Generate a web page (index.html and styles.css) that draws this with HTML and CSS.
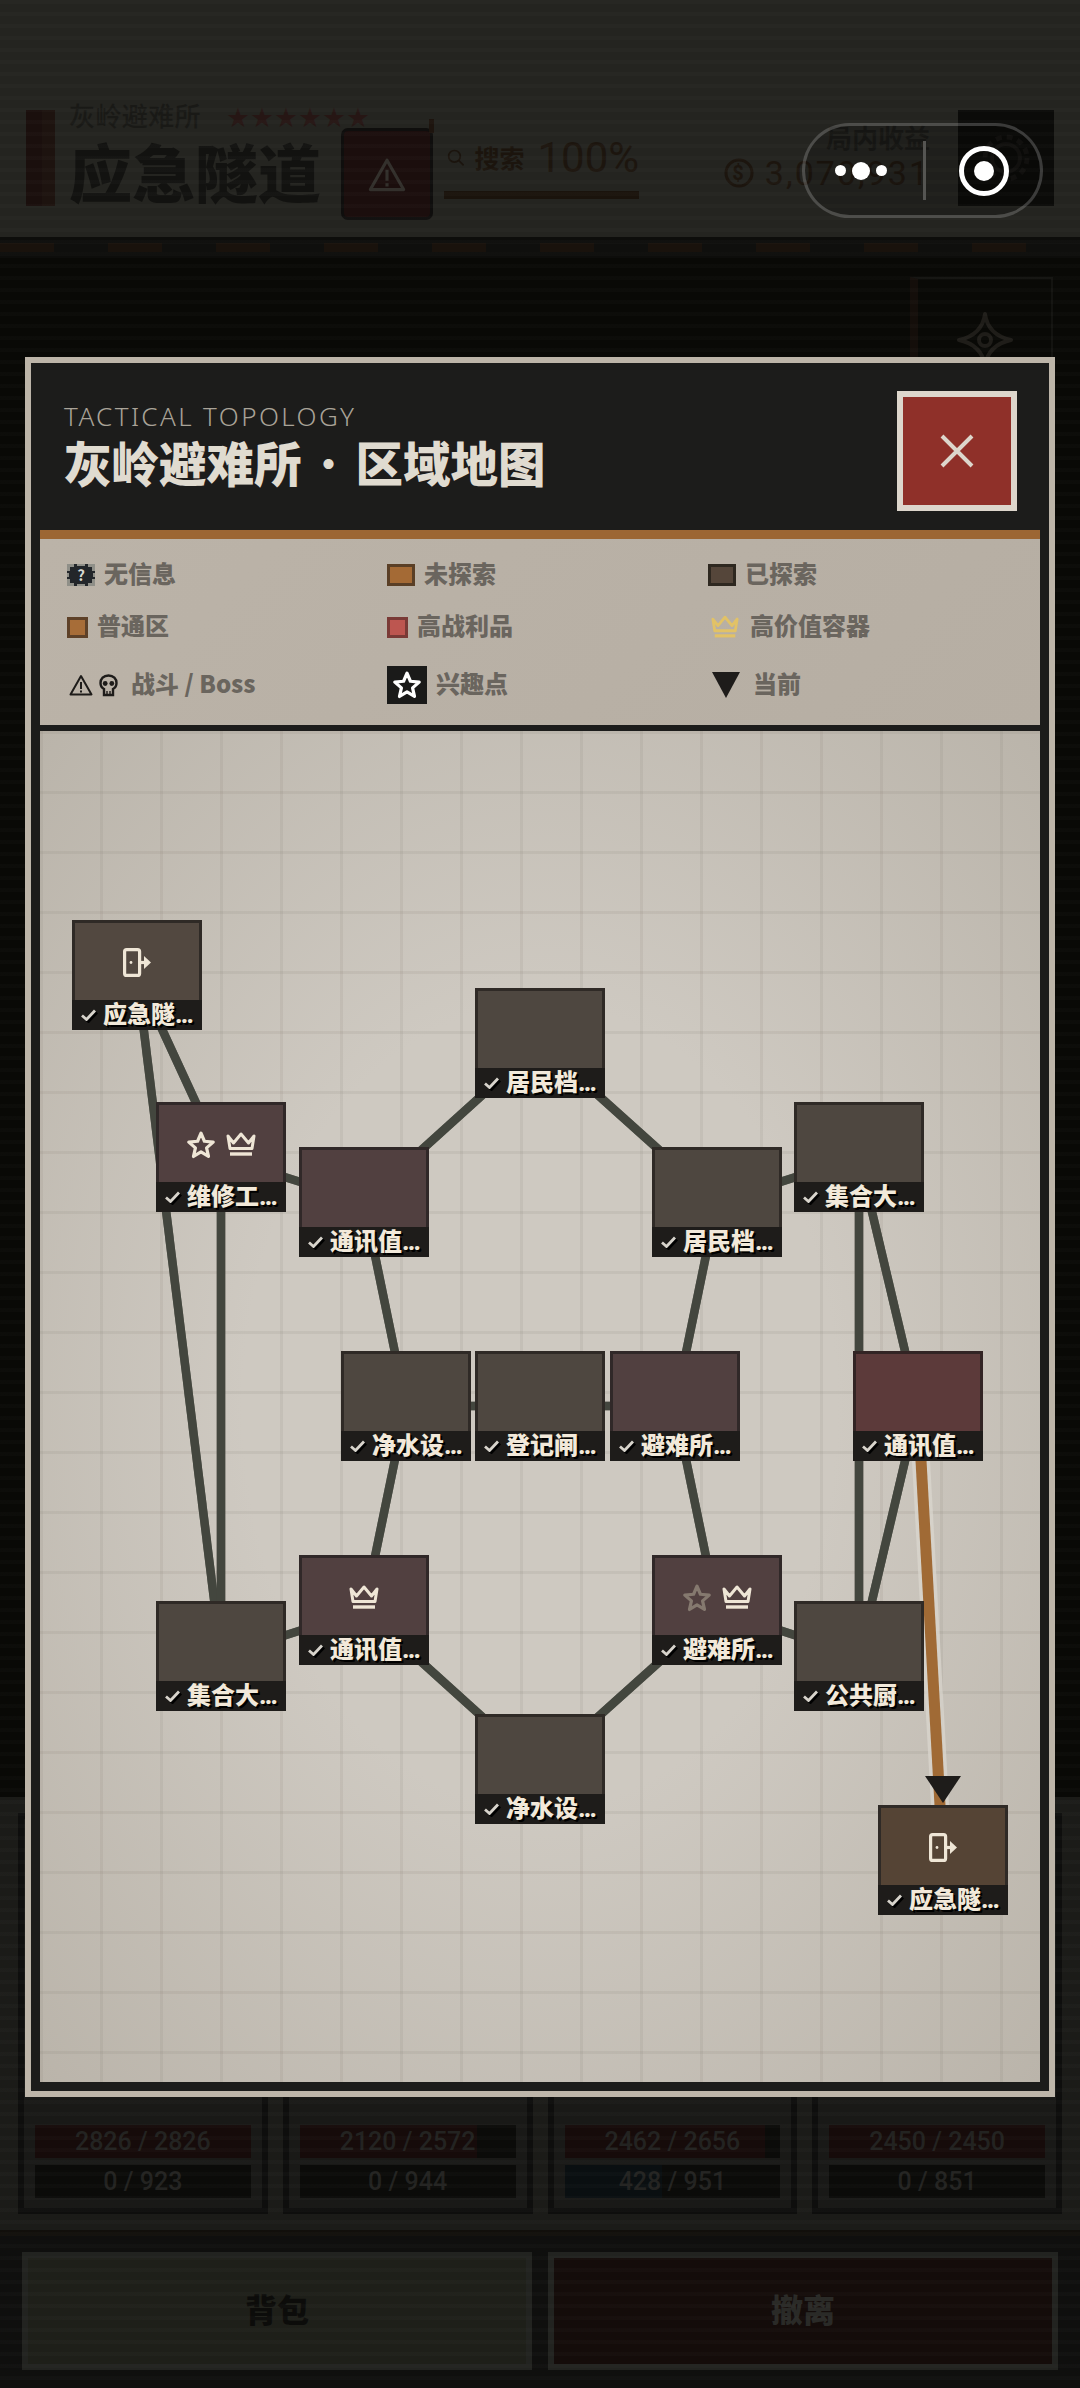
FILE: index.html
```html
<!DOCTYPE html>
<html lang="zh-CN">
<head>
    <meta charset="UTF-8">
    <meta name="viewport" content="width=device-width, initial-scale=1.0">
    <title>灰岭避难所 - 区域地图</title>
    <link rel="stylesheet" href="styles.css">
</head>
<body>
    <svg class="icon-defs" aria-hidden="true">
        <symbol id="i-star" viewBox="0 0 28 26">
            <polygon points="14,2 17.2,9.5 25.4,10.3 19.2,15.7 21,23.7 14,19.5 7,23.7 8.8,15.7 2.6,10.3 10.8,9.5" fill="none" stroke="currentColor" stroke-width="3" stroke-linejoin="round"/>
        </symbol>
        <symbol id="i-crown" viewBox="0 0 30 25">
            <path d="M2 4 L7.5 11 L15 2 L22.5 11 L28 4 L26 16.5 H4 Z" fill="none" stroke="currentColor" stroke-width="3" stroke-linejoin="round"/>
            <path d="M4 22 H26" fill="none" stroke="currentColor" stroke-width="3.4"/>
        </symbol>
        <symbol id="i-exit" viewBox="0 0 28 29">
            <rect x="1.6" y="1.6" width="15" height="25.8" rx="2" fill="none" stroke="currentColor" stroke-width="3.2"/>
            <circle cx="8" cy="14.5" r="1.4" fill="currentColor"/>
            <path d="M17 14.5 H23" stroke="currentColor" stroke-width="3.2"/>
            <path d="M21 8 L28 14.5 L21 21 Z" fill="currentColor"/>
        </symbol>
        <symbol id="i-check" viewBox="0 0 15 12">
            <path d="M1 6.5 L5.5 10.5 L14 1.5" fill="none" stroke="currentColor" stroke-width="2.8"/>
        </symbol>
        <symbol id="i-warn" viewBox="0 0 24 22">
            <path d="M12 2 L22.5 20.5 H1.5 Z" fill="none" stroke="currentColor" stroke-width="2" stroke-linejoin="round"/>
            <path d="M12 8 V15 M12 16.5 V18.5" stroke="currentColor" stroke-width="2"/>
        </symbol>
    </svg>

    <div class="game">
        <header class="topbar">
            <div class="stripe"></div>
            <div class="zone-title">
                <div class="zone-sub">
                    <span>灰岭避难所</span>
                    <span class="zone-stars">★★★★★★</span>
                </div>
                <h1>应急隧道</h1>
            </div>
            <div class="danger-btn">
                <svg width="38" height="35"><use href="#i-warn"/></svg>
            </div>
            <div class="search-box">
                <div class="search-row">
                    <svg class="search-icon" width="21" height="21" viewBox="0 0 21 21"><circle cx="9" cy="9" r="7" fill="none" stroke="currentColor" stroke-width="2"/><path d="M14 14 L20 20" stroke="currentColor" stroke-width="2"/></svg>
                    <span class="search-label">搜索</span>
                    <span class="search-pct">100%</span>
                </div>
                <div class="search-bar"></div>
            </div>
            <div class="income">
                <div class="income-label">局内收益</div>
                <div class="income-value">
                    <svg width="30" height="30" viewBox="0 0 30 30"><circle cx="15" cy="15" r="13" fill="none" stroke="currentColor" stroke-width="3"/><text x="15" y="22" text-anchor="middle" font-size="20" font-weight="700" fill="currentColor">$</text></svg>
                    <span>3,070,931</span>
                </div>
            </div>
            <div class="gear-btn">
                <svg width="54" height="54" viewBox="0 0 54 54"><circle cx="27" cy="27" r="14" fill="none" stroke="currentColor" stroke-width="4"/><circle cx="27" cy="27" r="21" fill="none" stroke="currentColor" stroke-width="5" stroke-dasharray="6 5"/></svg>
            </div>
        </header>
        <div class="hazard"><div class="hazard-dash"></div></div>

        <main class="field">
            <div class="side-card">
                <svg width="56" height="56" viewBox="0 0 56 56"><path d="M28 2 Q31 23 54 28 Q31 33 28 54 Q25 33 2 28 Q25 23 28 2 Z" fill="none" stroke="currentColor" stroke-width="4" stroke-linejoin="round"/><circle cx="28" cy="28" r="6" fill="none" stroke="currentColor" stroke-width="4"/></svg>
            </div>
        </main>

        <section class="party">
            <div class="cards">
                <div class="card">
                    <div class="bar"><div class="bar-fill hp w-100"></div><span>2826 / 2826</span></div>
                    <div class="bar"><span>0 / 923</span></div>
                </div>
                <div class="card">
                    <div class="bar"><div class="bar-fill hp w-82"></div><span>2120 / 2572</span></div>
                    <div class="bar"><span>0 / 944</span></div>
                </div>
                <div class="card">
                    <div class="bar"><div class="bar-fill hp w-93"></div><span>2462 / 2656</span></div>
                    <div class="bar"><div class="bar-fill mp w-45"></div><span>428 / 951</span></div>
                </div>
                <div class="card">
                    <div class="bar"><div class="bar-fill hp w-100"></div><span>2450 / 2450</span></div>
                    <div class="bar"><span>0 / 851</span></div>
                </div>
            </div>
        </section>

        <footer class="actions">
            <div class="action bag">背包</div>
            <div class="action leave">撤离</div>
        </footer>
    </div>

    <div class="capsule">
        <div class="capsule-dots"><i></i><i class="big"></i><i></i></div>
        <div class="capsule-line"></div>
        <div class="capsule-target"><i></i></div>
    </div>

    <div class="modal">
        <div class="modal-head">
            <div>
                <div class="modal-en">TACTICAL TOPOLOGY</div>
                <div class="modal-title">灰岭避难所<span class="title-dot">·</span>区域地图</div>
            </div>
            <div class="close-btn">
                <svg width="36" height="36" viewBox="0 0 36 36"><path d="M3 3 L33 33 M33 3 L3 33" stroke="currentColor" stroke-width="4"/></svg>
            </div>
        </div>

        <div class="legend">
            <div class="legend-item">
                <svg class="unknown-icon" width="28" height="22" viewBox="0 0 28 22">
                    <rect width="28" height="22" fill="#8f8f88"/>
                    <path d="M7 0 H10 V2 H18 V0 H21 V3 H25 V7 H28 V9 H26 V13 H28 V15 H25 V19 H21 V22 H18 V20 H10 V22 H7 V19 H3 V15 H0 V13 H2 V9 H0 V7 H3 V3 H7 Z" fill="#23262a"/>
                    <text x="14" y="17" text-anchor="middle" font-size="15" font-weight="700" fill="#d8d8d2">?</text>
                </svg>
                <span>无信息</span>
            </div>
            <div class="legend-item"><i class="swatch wide unexplored"></i><span>未探索</span></div>
            <div class="legend-item"><i class="swatch wide explored"></i><span>已探索</span></div>
            <div class="legend-item"><i class="swatch normal"></i><span>普通区</span></div>
            <div class="legend-item"><i class="swatch loot"></i><span>高战利品</span></div>
            <div class="legend-item crown-item">
                <svg class="gold" width="28" height="24"><use href="#i-crown"/></svg>
                <span>高价值容器</span>
            </div>
            <div class="legend-item combat-item">
                <svg class="ink" width="24" height="22"><use href="#i-warn"/></svg>
                <svg class="ink" width="19" height="23" viewBox="0 0 19 23">
                    <path d="M9.5 1.5 C4.5 1.5 1.5 4.8 1.5 9 C1.5 12 3 14 5 15 V21 H14 V15 C16 14 17.5 12 17.5 9 C17.5 4.8 14.5 1.5 9.5 1.5 Z" fill="none" stroke="currentColor" stroke-width="2.4"/>
                    <circle cx="6.2" cy="9.5" r="2.4" fill="currentColor"/>
                    <circle cx="12.8" cy="9.5" r="2.4" fill="currentColor"/>
                    <path d="M8 17 V21 M11 17 V21" stroke="currentColor" stroke-width="1.4"/>
                </svg>
                <span>战斗 / Boss</span>
            </div>
            <div class="legend-item">
                <div class="poi-box"><svg width="30" height="28"><use href="#i-star"/></svg></div>
                <span>兴趣点</span>
            </div>
            <div class="legend-item current-item"><i class="down-arrow"></i><span>当前</span></div>
        </div>

        <div class="map">
            <svg class="links" width="1000" height="1351" viewBox="0 0 1000 1351">
                <use href="#link-set" class="link-halo"/>
                <g id="link-set">
                    <line x1="97" y1="244" x2="181" y2="925"/>
                    <line x1="97" y1="244" x2="181" y2="426"/>
                    <line x1="181" y1="426" x2="181" y2="925"/>
                    <line x1="181" y1="426" x2="324" y2="471"/>
                    <line x1="324" y1="471" x2="500" y2="312"/>
                    <line x1="500" y1="312" x2="677" y2="471"/>
                    <line x1="677" y1="471" x2="819" y2="426"/>
                    <line x1="324" y1="471" x2="366" y2="675"/>
                    <line x1="366" y1="675" x2="635" y2="675"/>
                    <line x1="677" y1="471" x2="635" y2="675"/>
                    <line x1="819" y1="426" x2="878" y2="675"/>
                    <line x1="819" y1="426" x2="819" y2="925"/>
                    <line x1="878" y1="675" x2="819" y2="925"/>
                    <line x1="366" y1="675" x2="324" y2="879"/>
                    <line x1="635" y1="675" x2="677" y2="879"/>
                    <line x1="324" y1="879" x2="181" y2="925"/>
                    <line x1="677" y1="879" x2="819" y2="925"/>
                    <line x1="324" y1="879" x2="500" y2="1038"/>
                    <line x1="677" y1="879" x2="500" y2="1038"/>
                </g>
                <line class="route-halo" x1="878" y1="675" x2="903" y2="1129"/>
                <line class="route" x1="878" y1="675" x2="903" y2="1129"/>
            </svg>

            <div class="node n1 tone-start">
                <div class="node-body"><svg class="cream" width="28" height="29"><use href="#i-exit"/></svg></div>
                <div class="node-label"><svg width="15" height="12"><use href="#i-check"/></svg>应急隧…</div>
            </div>
            <div class="node n2 tone-rose">
                <div class="node-body">
                    <svg class="cream" width="30" height="28"><use href="#i-star"/></svg>
                    <svg class="cream" width="30" height="25"><use href="#i-crown"/></svg>
                </div>
                <div class="node-label"><svg width="15" height="12"><use href="#i-check"/></svg>维修工…</div>
            </div>
            <div class="node n3 tone-rose">
                <div class="node-body"></div>
                <div class="node-label"><svg width="15" height="12"><use href="#i-check"/></svg>通讯值…</div>
            </div>
            <div class="node n4">
                <div class="node-body"></div>
                <div class="node-label"><svg width="15" height="12"><use href="#i-check"/></svg>居民档…</div>
            </div>
            <div class="node n5">
                <div class="node-body"></div>
                <div class="node-label"><svg width="15" height="12"><use href="#i-check"/></svg>居民档…</div>
            </div>
            <div class="node n6">
                <div class="node-body"></div>
                <div class="node-label"><svg width="15" height="12"><use href="#i-check"/></svg>集合大…</div>
            </div>
            <div class="node n7">
                <div class="node-body"></div>
                <div class="node-label"><svg width="15" height="12"><use href="#i-check"/></svg>净水设…</div>
            </div>
            <div class="node n8">
                <div class="node-body"></div>
                <div class="node-label"><svg width="15" height="12"><use href="#i-check"/></svg>登记闸…</div>
            </div>
            <div class="node n9 tone-rose">
                <div class="node-body"></div>
                <div class="node-label"><svg width="15" height="12"><use href="#i-check"/></svg>避难所…</div>
            </div>
            <div class="node n10 tone-red">
                <div class="node-body"></div>
                <div class="node-label"><svg width="15" height="12"><use href="#i-check"/></svg>通讯值…</div>
            </div>
            <div class="node n11 tone-rose">
                <div class="node-body"><svg class="cream" width="30" height="25"><use href="#i-crown"/></svg></div>
                <div class="node-label"><svg width="15" height="12"><use href="#i-check"/></svg>通讯值…</div>
            </div>
            <div class="node n12 tone-rose">
                <div class="node-body">
                    <svg class="faded" width="30" height="28"><use href="#i-star"/></svg>
                    <svg class="cream" width="30" height="25"><use href="#i-crown"/></svg>
                </div>
                <div class="node-label"><svg width="15" height="12"><use href="#i-check"/></svg>避难所…</div>
            </div>
            <div class="node n13">
                <div class="node-body"></div>
                <div class="node-label"><svg width="15" height="12"><use href="#i-check"/></svg>集合大…</div>
            </div>
            <div class="node n14">
                <div class="node-body"></div>
                <div class="node-label"><svg width="15" height="12"><use href="#i-check"/></svg>公共厨…</div>
            </div>
            <div class="node n15">
                <div class="node-body"></div>
                <div class="node-label"><svg width="15" height="12"><use href="#i-check"/></svg>净水设…</div>
            </div>
            <div class="node n16 tone-current">
                <div class="node-body"><svg class="cream" width="28" height="29"><use href="#i-exit"/></svg></div>
                <div class="node-label"><svg width="15" height="12"><use href="#i-check"/></svg>应急隧…</div>
            </div>
            <div class="here-marker"></div>
        </div>
    </div>
</body>
</html>
```

FILE: styles.css
```css
* {
    box-sizing: border-box;
}

body {
    margin: 0;
    width: 1080px;
    height: 2388px;
    position: relative;
    overflow: hidden;
    background-color: #090906;
    font-family: "Noto Sans CJK SC", "Noto Sans", sans-serif;
}

.icon-defs {
    position: absolute;
    width: 0;
    height: 0;
}

/* dimmed game screen behind the modal */
.game {
    position: relative;
    height: 2388px;
    display: flex;
    flex-direction: column;
}

.game::after {
    content: "";
    position: absolute;
    inset: 0;
    background: repeating-linear-gradient(180deg, rgba(255, 255, 255, 0.016) 0 4px, transparent 4px 12px);
    pointer-events: none;
}

.topbar {
    height: 237px;
    display: flex;
    align-items: flex-start;
    padding: 110px 26px 0;
    background-color: #242420;
}

.stripe {
    width: 29px;
    height: 96px;
    background: linear-gradient(90deg, #1a0f0d 55%, #1d130f 55%);
}

.zone-title {
    margin: -10px 0 0 14px;
    width: 272px;
}

.zone-sub {
    display: flex;
    align-items: center;
    gap: 26px;
    height: 30px;
    white-space: nowrap;
    font-size: 26px;
    line-height: 30px;
    font-weight: 500;
    letter-spacing: 0.4px;
    color: #191916;
}

.zone-stars {
    font-size: 22px;
    letter-spacing: 2px;
    color: #261614;
}

.zone-title h1 {
    margin: 3px 0 0;
    font-size: 63px;
    line-height: 74px;
    font-weight: 900;
    color: #121210;
}

.danger-btn {
    position: relative;
    width: 92px;
    height: 92px;
    margin-top: 18px;
    display: flex;
    align-items: center;
    justify-content: center;
    color: #33302c;
    background-color: #1b0e0d;
    border: 3px solid #0f0e0d;
    border-radius: 7px;
}

.danger-btn::after {
    content: "";
    position: absolute;
    top: -12px;
    right: -4px;
    width: 5px;
    height: 14px;
    background-color: #1d140e;
}

.search-box {
    width: 195px;
    margin: 25px 0 0 11px;
}

.search-row {
    display: flex;
    align-items: center;
    height: 44px;
    white-space: nowrap;
    color: #1b140d;
}

.search-icon {
    margin: 0 10px 0 3px;
}

.search-label {
    font-size: 25px;
    font-weight: 700;
}

.search-pct {
    margin-left: 13px;
    font-family: Roboto, sans-serif;
    font-size: 42px;
    color: #1c150e;
}

.search-bar {
    height: 8px;
    margin-top: 12px;
    background-color: #1a130c;
}

.income {
    margin: 12px 28px 0 auto;
    text-align: right;
}

.income-label {
    font-size: 26px;
    line-height: 30px;
    font-weight: 700;
    color: #191916;
}

.income-value {
    display: flex;
    align-items: center;
    gap: 11px;
    margin-top: 1px;
    font-family: Roboto, sans-serif;
    font-size: 34px;
    letter-spacing: 2px;
    color: #1c150e;
}

.gear-btn {
    width: 96px;
    height: 96px;
    display: flex;
    align-items: center;
    justify-content: center;
    color: #141311;
    background-color: #0b0b09;
}

.hazard {
    height: 21px;
    padding-top: 6px;
    background-color: #0d0d0b;
}

.hazard-dash {
    height: 9px;
    background: repeating-linear-gradient(90deg, #19120c 0 54px, #0f0f0d 54px 108px);
}

.field {
    flex: 1;
    padding: 19px 27px 0 0;
    display: flex;
    justify-content: flex-end;
    align-items: flex-start;
}

.side-card {
    width: 143px;
    height: 240px;
    padding-top: 33px;
    display: flex;
    justify-content: center;
    align-items: flex-start;
    color: #1f1d19;
    border-top: 2px solid #131310;
    border-right: 2px solid #131310;
    border-left: 8px solid #140e0a;
}

.party {
    height: 439px;
    flex-shrink: 0;
    padding-top: 16px;
    background-color: #1b1b18;
    border-bottom: 6px solid #110f0b;
}

.cards {
    display: flex;
    gap: 15px;
    padding: 0 18px;
}

.card {
    flex: 1;
    height: 401px;
    padding: 0 11px 10px;
    display: flex;
    flex-direction: column;
    justify-content: flex-end;
    gap: 7px;
    background-color: #191917;
    border: 6px solid #0e0e0d;
}

.bar {
    position: relative;
    height: 33px;
    background-color: #0b0b09;
    text-align: center;
    font-family: Roboto, sans-serif;
    font-size: 25px;
    font-weight: 500;
    line-height: 33px;
    color: #232321;
}

.bar span {
    position: relative;
}

.bar-fill {
    position: absolute;
    top: 0;
    left: 0;
    bottom: 0;
}

.bar-fill.hp {
    background-color: #160b0a;
}

.bar-fill.mp {
    background-color: #0a0f11;
}

.w-100 { width: 100%; }
.w-93 { width: 93%; }
.w-82 { width: 82%; }
.w-45 { width: 45%; }

.actions {
    height: 152px;
    flex-shrink: 0;
    display: flex;
    gap: 16px;
    padding: 16px 22px 18px;
    background-color: #0f0f0e;
}

.action {
    flex: 1;
    display: flex;
    align-items: center;
    justify-content: center;
    padding-bottom: 6px;
    font-size: 32px;
    font-weight: 900;
    border: 6px solid #222320;
}

.action.bag {
    color: #0c0c0a;
    background-color: #1e1f19;
}

.action.leave {
    color: #2a2a27;
    background-color: #140c0a;
}

/* wechat capsule */
.capsule {
    position: absolute;
    top: 123px;
    left: 802px;
    width: 241px;
    height: 95px;
    display: flex;
    align-items: center;
    border: 3px solid rgba(255, 255, 255, 0.2);
    border-radius: 48px;
    background-color: rgba(0, 0, 0, 0.12);
}

.capsule-dots {
    width: 112px;
    margin-right: 6px;
    display: flex;
    align-items: center;
    justify-content: center;
    gap: 6px;
}

.capsule-dots i {
    width: 11px;
    height: 11px;
    border-radius: 50%;
    background-color: #fff;
}

.capsule-dots i.big {
    width: 18px;
    height: 18px;
}

.capsule-line {
    width: 3px;
    height: 59px;
    background-color: #555552;
}

.capsule-target {
    width: 50px;
    height: 50px;
    margin-left: 33px;
    display: flex;
    align-items: center;
    justify-content: center;
    border: 5px solid #fff;
    border-radius: 50%;
}

.capsule-target i {
    width: 20px;
    height: 20px;
    border-radius: 50%;
    background-color: #fff;
}

/* map modal */
.modal {
    position: absolute;
    top: 357px;
    left: 25px;
    width: 1030px;
    height: 1740px;
    display: flex;
    flex-direction: column;
    padding: 0 9px 9px;
    background-color: #1c1c1b;
    border: 6px solid #bdb5a9;
}

.modal-head {
    height: 176px;
    flex-shrink: 0;
    display: flex;
    justify-content: space-between;
    padding: 28px 23px 0 24px;
    border-bottom: 9px solid #9c6633;
}

.modal-en {
    margin-top: 7px;
    font-family: "Noto Sans", sans-serif;
    font-size: 26px;
    line-height: 36px;
    font-weight: 300;
    letter-spacing: 2.4px;
    color: #a9a398;
}

.modal-title {
    margin-top: -3px;
    font-size: 47.5px;
    line-height: 62px;
    font-weight: 900;
    color: #e0dbd0;
}

.title-dot {
    display: inline-block;
    width: 54px;
    text-align: center;
    font-weight: 400;
}

.close-btn {
    width: 120px;
    height: 120px;
    display: flex;
    align-items: center;
    justify-content: center;
    color: #ddd6cc;
    background-color: #8f3029;
    border: 6px solid #ddd6cc;
}

.legend {
    height: 186px;
    flex-shrink: 0;
    display: grid;
    grid-template-columns: 320px 321px 1fr;
    grid-template-rows: 24px 28px 36px;
    row-gap: 26px;
    padding: 24px 0 0 27px;
    background: linear-gradient(135deg, #bbb3a8, #b6aea3);
}

.legend-item {
    display: flex;
    align-items: center;
    gap: 9px;
    font-size: 24px;
    line-height: 24px;
    font-weight: 900;
    color: #6a655e;
}

.legend-item span {
    position: relative;
    top: -2px;
}

.swatch {
    display: block;
    width: 21px;
    height: 21px;
    border: 3px solid;
}

.swatch.wide {
    width: 28px;
    height: 22px;
}

.swatch.unexplored {
    background-color: #a46a35;
    border-color: #5a3f26;
}

.swatch.explored {
    background-color: #55463a;
    border-color: #2e2820;
}

.swatch.normal {
    background-color: #a76d38;
    border-color: #5e4128;
}

.swatch.loot {
    background-color: #bd5650;
    border-color: #7a3a36;
}

.gold {
    color: #e2c266;
}

.ink {
    color: #1e1c1a;
}

.crown-item {
    padding-left: 3px;
    gap: 11px;
}

.current-item {
    padding-left: 4px;
    gap: 13px;
}

.combat-item {
    padding-left: 2px;
    gap: 6px;
}

.combat-item span {
    margin-left: 7px;
}

.poi-box {
    width: 40px;
    height: 38px;
    flex-shrink: 0;
    display: flex;
    align-items: center;
    justify-content: center;
    color: #fff;
    background-color: #1a1a19;
}

.down-arrow {
    width: 0;
    height: 0;
    border-left: 14px solid transparent;
    border-right: 14px solid transparent;
    border-top: 26px solid #1e1c1a;
}

.map {
    position: relative;
    flex: 1;
    margin-top: 6px;
    background-color: #cdc8c0;
    background-image:
        linear-gradient(rgba(120, 112, 100, 0.11) 3px, transparent 3px),
        linear-gradient(90deg, rgba(120, 112, 100, 0.11) 3px, transparent 3px),
        radial-gradient(ellipse at center, #cec9c1 42%, #bab4aa 100%);
    background-size: 60px 60px, 60px 60px, 100% 100%;
}

.links {
    position: absolute;
    top: 0;
    left: 0;
}

#link-set {
    stroke: #43463e;
    stroke-width: 8.5;
}

.link-halo {
    stroke: #dcd8d0;
    stroke-width: 15;
    opacity: 0.7;
}

.route-halo {
    stroke: #dcd8d0;
    stroke-width: 18;
    opacity: 0.7;
}

.route {
    stroke: #a06a35;
    stroke-width: 11;
}

.node {
    position: absolute;
    width: 130px;
    height: 110px;
    display: flex;
    flex-direction: column;
    --fill: #4e4740;
    --edge: #2f2a26;
}

.tone-start { --fill: #524840; }
.tone-rose { --fill: #514040; --edge: #302828; }
.tone-red { --fill: #5c3a3a; --edge: #322424; }
.tone-current { --fill: #554435; }

.node-body {
    flex: 1;
    display: flex;
    align-items: center;
    justify-content: center;
    gap: 10px;
    padding-top: 2px;
    background-color: var(--fill);
    border: 3px solid var(--edge);
    border-bottom: none;
}

.node-label {
    height: 30px;
    display: flex;
    align-items: center;
    gap: 7px;
    padding-left: 9px;
    background-color: #1e1c1a;
    font-family: Roboto, "Noto Sans CJK SC", sans-serif;
    font-size: 24px;
    line-height: 30px;
    font-weight: 900;
    white-space: nowrap;
    color: #f2e9da;
    text-shadow: 2px 2px 0 #000;
}

.node-label svg {
    flex-shrink: 0;
    color: #d8d4cc;
    filter: drop-shadow(2px 2px 0 #000);
}

.cream {
    color: #efe6d6;
}

.faded {
    color: #85796f;
}

.n1 { left: 32px; top: 189px; }
.n2 { left: 116px; top: 371px; }
.n3 { left: 259px; top: 416px; }
.n4 { left: 435px; top: 257px; }
.n5 { left: 612px; top: 416px; }
.n6 { left: 754px; top: 371px; }
.n7 { left: 301px; top: 620px; }
.n8 { left: 435px; top: 620px; }
.n9 { left: 570px; top: 620px; }
.n10 { left: 813px; top: 620px; }
.n11 { left: 259px; top: 824px; }
.n12 { left: 612px; top: 824px; }
.n13 { left: 116px; top: 870px; }
.n14 { left: 754px; top: 870px; }
.n15 { left: 435px; top: 983px; }
.n16 { left: 838px; top: 1074px; }

.here-marker {
    position: absolute;
    left: 885px;
    top: 1045px;
    width: 0;
    height: 0;
    border-left: 18px solid transparent;
    border-right: 18px solid transparent;
    border-top: 27px solid #1e1c1a;
}
```
